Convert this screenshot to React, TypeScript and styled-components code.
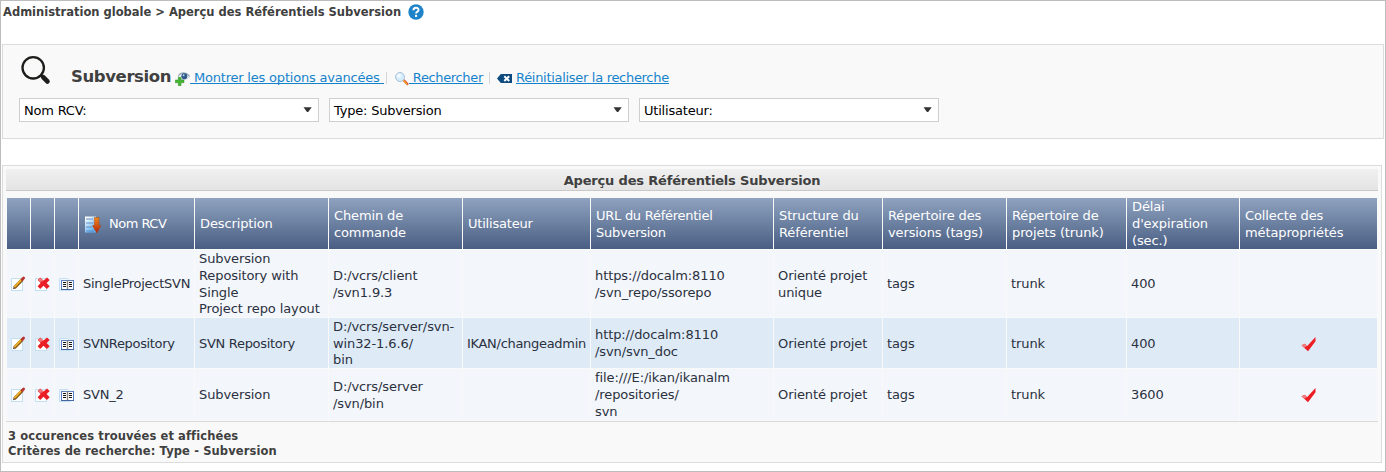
import React from 'react';
import styled, { createGlobalStyle } from 'styled-components';

const GlobalStyle = createGlobalStyle`
  * { box-sizing: border-box; }
  body {
    margin: 0;
    background: #fff;
    font-family: Verdana, 'DejaVu Sans', sans-serif;
    font-size: 13px;
    color: #2b3140;
  }
  svg { display: block; flex: none; }
`;

const Page = styled.main`
  height: 472px;
  border: 1px solid #bdbdbd;
  padding: 0 1px;
  overflow: hidden;
`;

const Breadcrumb = styled.header`
  display: flex;
  align-items: center;
  gap: 7px;
  height: 22px;
  margin: 0 0 21px 1px;
  font-size: 11.5px;
  font-weight: bold;
  color: #404040;
  white-space: nowrap;
`;

const SearchPanel = styled.section`
  height: 95px;
  padding: 10px 16px 0;
  border: 1px solid #dcdcdc;
  background: #f9f9f9;
`;

const SearchHead = styled.div`
  display: flex;
  align-items: flex-start;
  height: 43px;
`;

const SearchTitle = styled.h1`
  width: 100px;
  margin: 11px 4px 0 18px;
  font-size: 16.5px;
  line-height: 22px;
  letter-spacing: -0.4px;
  color: #404040;
  white-space: nowrap;
`;

const Action = styled.a<{ $width: number; $indent?: number; $tracking: number }>`
  display: flex;
  flex: none;
  width: ${(p) => p.$width}px;
  margin-top: 14px;
  padding-left: ${(p) => p.$indent ?? 0}px;
  letter-spacing: ${(p) => p.$tracking}px;
  line-height: 17px;
  color: #1583cc;
  white-space: pre;
`;

const ActionLabel = styled.span<{ $gap?: number }>`
  height: 15px;
  margin-left: ${(p) => p.$gap ?? 0}px;
  border-bottom: 1px solid #1583cc;
`;

const Separator = styled.span`
  width: 1px;
  height: 12px;
  margin-top: 17px;
  background: #d5d5d5;
`;

const Filters = styled.div`
  display: flex;
  gap: 10px;
`;

const Select = styled.div`
  display: flex;
  align-items: center;
  justify-content: space-between;
  width: 300px;
  height: 24px;
  padding: 0 6px 0 4px;
  border: 1px solid #cfcfcf;
  background: #fff;
  color: #000;
  letter-spacing: -0.2px;
`;

const ResultPanel = styled.section`
  width: 1380px;
  height: 298px;
  margin-top: 26px;
  padding: 3px;
  border: 1px solid #dcdcdc;
  background: #f9f9f9;
`;

const Caption = styled.h2`
  height: 22px;
  margin: 0 0 7px;
  border-bottom: 1px solid #c9c9c9;
  background: linear-gradient(#f0f0f0, #e4e4e4);
  font-size: 13px;
  line-height: 23px;
  letter-spacing: -0.17px;
  text-align: center;
  color: #404040;
`;

const Table = styled.div`
  display: grid;
  grid-template-columns: 23px 23px 23px 115px 133px 133px 127px 182px 108px 123px 119px 112px 137px;
  grid-template-rows: 51px 67px 50px 51px;
  gap: 1px;
  margin: 0 1px;
`;

const HeadCell = styled.div<{ $tracking?: number }>`
  display: flex;
  align-items: center;
  padding: 2px 0 0 5px;
  background: linear-gradient(#8fa2bf, #495e83);
  color: #fff;
  letter-spacing: ${(p) => p.$tracking ?? -0.12}px;
  line-height: 16.7px;
  white-space: pre;
`;

const Cell = styled.div<{ $alt?: boolean; $tracking?: number }>`
  display: flex;
  align-items: center;
  padding: 2px 0 0 4px;
  background: ${(p) => (p.$alt ? '#deebf7' : '#f3f6fb')};
  letter-spacing: ${(p) => p.$tracking ?? -0.1}px;
  line-height: 16.8px;
  white-space: pre;
`;

const IconCell = styled.div<{ $alt?: boolean; $center?: boolean }>`
  display: flex;
  align-items: center;
  justify-content: ${(p) => (p.$center ? 'center' : 'flex-start')};
  padding: ${(p) => (p.$alt ? 2 : 1)}px 0 0 ${(p) => (p.$center ? 0 : 4)}px;
  background: ${(p) => (p.$alt ? '#deebf7' : '#f3f6fb')};
`;

const Summary = styled.footer`
  margin-top: 1px;
  padding: 7px 2px 0;
  border-top: 1px solid #d9d9d9;
  font-size: 11.5px;
  font-weight: bold;
  line-height: 15px;
  letter-spacing: 0.11px;
  color: #404040;
`;

const HelpIcon = () => (
  <svg width="16" height="16" viewBox="0 0 16 16">
    <circle cx="8" cy="8" r="7.7" fill="#1e83c9" />
    <path d="M5.4 6.2C5.4 2.9 10.6 3 10.6 5.9C10.6 7.7 8.1 7.6 8.1 9.6" fill="none" stroke="#fff" strokeWidth="1.9" />
    <rect x="7" y="10.8" width="2.1" height="2.1" fill="#fff" />
  </svg>
);

const BigSearchIcon = () => (
  <svg width="34" height="32" viewBox="0 0 34 32">
    <circle cx="14.2" cy="12.8" r="10.7" fill="none" stroke="#1d1d1b" strokeWidth="2.3" />
    <path d="M22 20L25 23" stroke="#1d1d1b" strokeWidth="2.5" />
    <path d="M24.4 22.4L28.4 26.4" stroke="#1d1d1b" strokeWidth="4.8" strokeLinecap="round" />
  </svg>
);

const OptionsIcon = () => (
  <svg width="15" height="17" viewBox="0 0 15 17">
    <path d="M3 7C5 3.5 12 3.5 14.5 7.5C12 10.5 7 11.5 4.5 9Z" fill="#fff" stroke="#b5c4d4" />
    <path d="M3.5 6.5C6 2.8 12 3.3 14.5 7.5" fill="none" stroke="#8fa5ba" strokeWidth="1.3" />
    <circle cx="9.3" cy="7.2" r="3" fill="#31598a" />
    <circle cx="8.6" cy="6.3" r="1" fill="#b9d2ec" />
    <path d="M3.3 8.2H6V11H9V13.7H6V16.7H3.3V13.7H0.2V11H3.3Z" fill="#46b435" stroke="#329325" strokeWidth=".5" />
  </svg>
);

const SmallSearchIcon = () => (
  <svg width="14" height="17" viewBox="0 0 14 17">
    <path d="M8.5 11L13 15.8" stroke="#d8432d" strokeWidth="2.4" />
    <path d="M8.2 11.1L12.4 15.6" stroke="#f7b62d" strokeWidth="1.2" />
    <circle cx="5" cy="8" r="4.5" fill="#d4ecfb" stroke="#a9c2d8" />
    <circle cx="4" cy="6.8" r="2" fill="#f4fbff" />
  </svg>
);

const ResetIcon = () => (
  <svg width="15" height="17" viewBox="0 0 15 17">
    <path d="M0 9.5L3.8 5H15V14H3.8Z" fill="#0d4a80" />
    <path d="M7.3 7.2L12.2 12M12.2 7.2L7.3 12" stroke="#fff" strokeWidth="2" />
  </svg>
);

const Arrow = () => (
  <svg width="9" height="6" viewBox="0 0 9 6">
    <path d="M.5 .3H8.7L5.2 5H4Z" fill="#333" />
  </svg>
);

const SortIcon = () => (
  <svg width="18" height="18" viewBox="0 0 18 18">
    <defs>
      <linearGradient id="sheet" x1="0" y1="0" x2="0.6" y2="1">
        <stop offset="0.1" stopColor="#fff" />
        <stop offset="1" stopColor="#5cb0f3" />
      </linearGradient>
      <linearGradient id="down" x1="0" y1="0" x2="0" y2="1">
        <stop offset="0" stopColor="#ef8a1d" />
        <stop offset="1" stopColor="#b5200b" />
      </linearGradient>
    </defs>
    <rect x="1" y=".5" width="11" height="16" fill="url(#sheet)" />
    <path d="M2 3H9M2 7H9M2 11H8M2 15H10" stroke="#5b86ba" strokeWidth=".9" />
    <path d="M10.3 1.5H15V9.5H17L12.8 17L8.3 9.5H10.3Z" fill="url(#down)" stroke="#a54a17" strokeWidth=".5" />
  </svg>
);

const EditIcon = () => (
  <svg width="16" height="16" viewBox="0 0 16 16">
    <rect x=".5" y="2.5" width="11" height="12" fill="#fff" stroke="#c3e0f3" />
    <path d="M1.8 13.3L2.7 10.6L4.8 12.5Z" fill="#6b5340" />
    <path d="M3.5 11.7L11.3 3.6" stroke="#8a5a13" strokeWidth="3.2" />
    <path d="M3.4 11L10.9 3.2" stroke="#f2b32a" strokeWidth="1.8" />
    <path d="M11.2 3.5L12.6 2.1" stroke="#b83431" strokeWidth="2.8" strokeLinecap="round" />
  </svg>
);

const DeleteIcon = () => (
  <svg width="16" height="16" viewBox="0 0 16 16">
    <rect x=".5" y="2.5" width="11" height="12" fill="#fff" stroke="#c3e0f3" />
    <path d="M5.2 1.4L8.5 4.4L12 1.4L14.7 4.1L11.6 7L14.7 10.3L11.8 13L8.5 9.8L5.2 13L2.6 10.3L5.6 7L2.6 4.1Z" fill="#ea1f25" />
    <path d="M5.2 1.8L8.5 5L4.8 6.1L3 4.1Z" fill="#f3787a" />
  </svg>
);

const BookIcon = () => (
  <svg width="16" height="16" viewBox="0 0 16 16">
    <path d="M.5 2.5H8.5L11.5 5.5V14.5H.5Z" fill="#f3f9fe" stroke="#c3e0f3" />
    <rect x="2.5" y="4.5" width="12" height="9" fill="#fff" stroke="#5b7fc0" />
    <path d="M4 6.5H7M4 8.5H7M4 10.5H7M10 6.5H13M10 8.5H13M10 10.5H13" stroke="#161616" />
    <path d="M8.5 4V13" stroke="#8a8578" strokeWidth="1.4" />
    <path d="M2 13.5H15" stroke="#4565a3" />
  </svg>
);

const CheckIcon = () => (
  <svg width="16" height="16" viewBox="0 0 16 16">
    <path d="M.5 9.3L4 7.7L6 10.2L14.5 1V5.2L7 15.3Z" fill="#ee1c23" />
    <path d="M.5 9.3L4 7.7L5.7 9.9L3.5 11.7Z" fill="#ef7f82" />
  </svg>
);

const tracking: Record<string, number> = {
  SingleProjectSVN: -0.26,
  SVNRepository: -0.34,
  'SVN Repository': -0.3,
  SVN_2: -0.2,
  'IKAN/changeadmin': -0.3,
  Utilisateur: -0.2,
  'URL du Référentiel\nSubversion': -0.26,
};

const headings = [
  'Description',
  'Chemin de\ncommande',
  'Utilisateur',
  'URL du Référentiel\nSubversion',
  'Structure du\nRéférentiel',
  'Répertoire des\nversions (tags)',
  'Répertoire de\nprojets (trunk)',
  "Délai\nd'expiration\n(sec.)",
  'Collecte des\nmétapropriétés',
];

const rows = [
  {
    cells: ['SingleProjectSVN', 'Subversion\nRepository with\nSingle\nProject repo layout', 'D:/vcrs/client\n/svn1.9.3', '', 'https://docalm:8110\n/svn_repo/ssorepo', 'Orienté projet\nunique', 'tags', 'trunk', '400'],
    meta: false,
  },
  {
    cells: ['SVNRepository', 'SVN Repository', 'D:/vcrs/server/svn-\nwin32-1.6.6/\nbin', 'IKAN/changeadmin', 'http://docalm:8110\n/svn/svn_doc', 'Orienté projet', 'tags', 'trunk', '400'],
    meta: true,
  },
  {
    cells: ['SVN_2', 'Subversion', 'D:/vcrs/server\n/svn/bin', '', 'file:///E:/ikan/ikanalm\n/repositories/\nsvn', 'Orienté projet', 'tags', 'trunk', '3600'],
    meta: true,
  },
];

const SortLabel = styled.span`
  margin-left: 7px;
  letter-spacing: -0.5px;
`;

export default function App() {
  return (
    <Page>
      <GlobalStyle />
      <Breadcrumb>
        <span>Administration globale &gt; Aperçu des Référentiels Subversion</span>
        <HelpIcon />
      </Breadcrumb>
      <SearchPanel>
        <SearchHead>
          <BigSearchIcon />
          <SearchTitle>Subversion</SearchTitle>
          <Action $width={211} $tracking={-0.2}>
            <OptionsIcon />
            <ActionLabel> Montrer les options avancées </ActionLabel>
          </Action>
          <Separator />
          <Action $width={102} $indent={8} $tracking={-0.35}>
            <SmallSearchIcon />
            <ActionLabel> Rechercher</ActionLabel>
          </Action>
          <Separator />
          <Action $width={180} $indent={7} $tracking={-0.3}>
            <ResetIcon />
            <ActionLabel $gap={4}>Réinitialiser la recherche</ActionLabel>
          </Action>
        </SearchHead>
        <Filters>
          {['Nom RCV:', 'Type: Subversion', 'Utilisateur:'].map((label) => (
            <Select key={label}>
              {label}
              <Arrow />
            </Select>
          ))}
        </Filters>
      </SearchPanel>
      <ResultPanel>
        <Caption>Aperçu des Référentiels Subversion</Caption>
        <Table>
          <HeadCell />
          <HeadCell />
          <HeadCell />
          <HeadCell>
            <SortIcon />
            <SortLabel>Nom RCV</SortLabel>
          </HeadCell>
          {headings.map((h) => (
            <HeadCell key={h} $tracking={tracking[h]}>{h}</HeadCell>
          ))}
          {rows.map((row, r) => {
            const alt = r % 2 === 1;
            return (
              <React.Fragment key={row.cells[0]}>
                <IconCell $alt={alt}><EditIcon /></IconCell>
                <IconCell $alt={alt}><DeleteIcon /></IconCell>
                <IconCell $alt={alt}><BookIcon /></IconCell>
                {row.cells.map((text, i) => (
                  <Cell key={i} $alt={alt} $tracking={tracking[text]}>{text}</Cell>
                ))}
                <IconCell $alt={alt} $center>{row.meta && <CheckIcon />}</IconCell>
              </React.Fragment>
            );
          })}
        </Table>
        <Summary>
          <div>3 occurences trouvées et affichées</div>
          <div>Critères de recherche: Type - Subversion</div>
        </Summary>
      </ResultPanel>
    </Page>
  );
}
